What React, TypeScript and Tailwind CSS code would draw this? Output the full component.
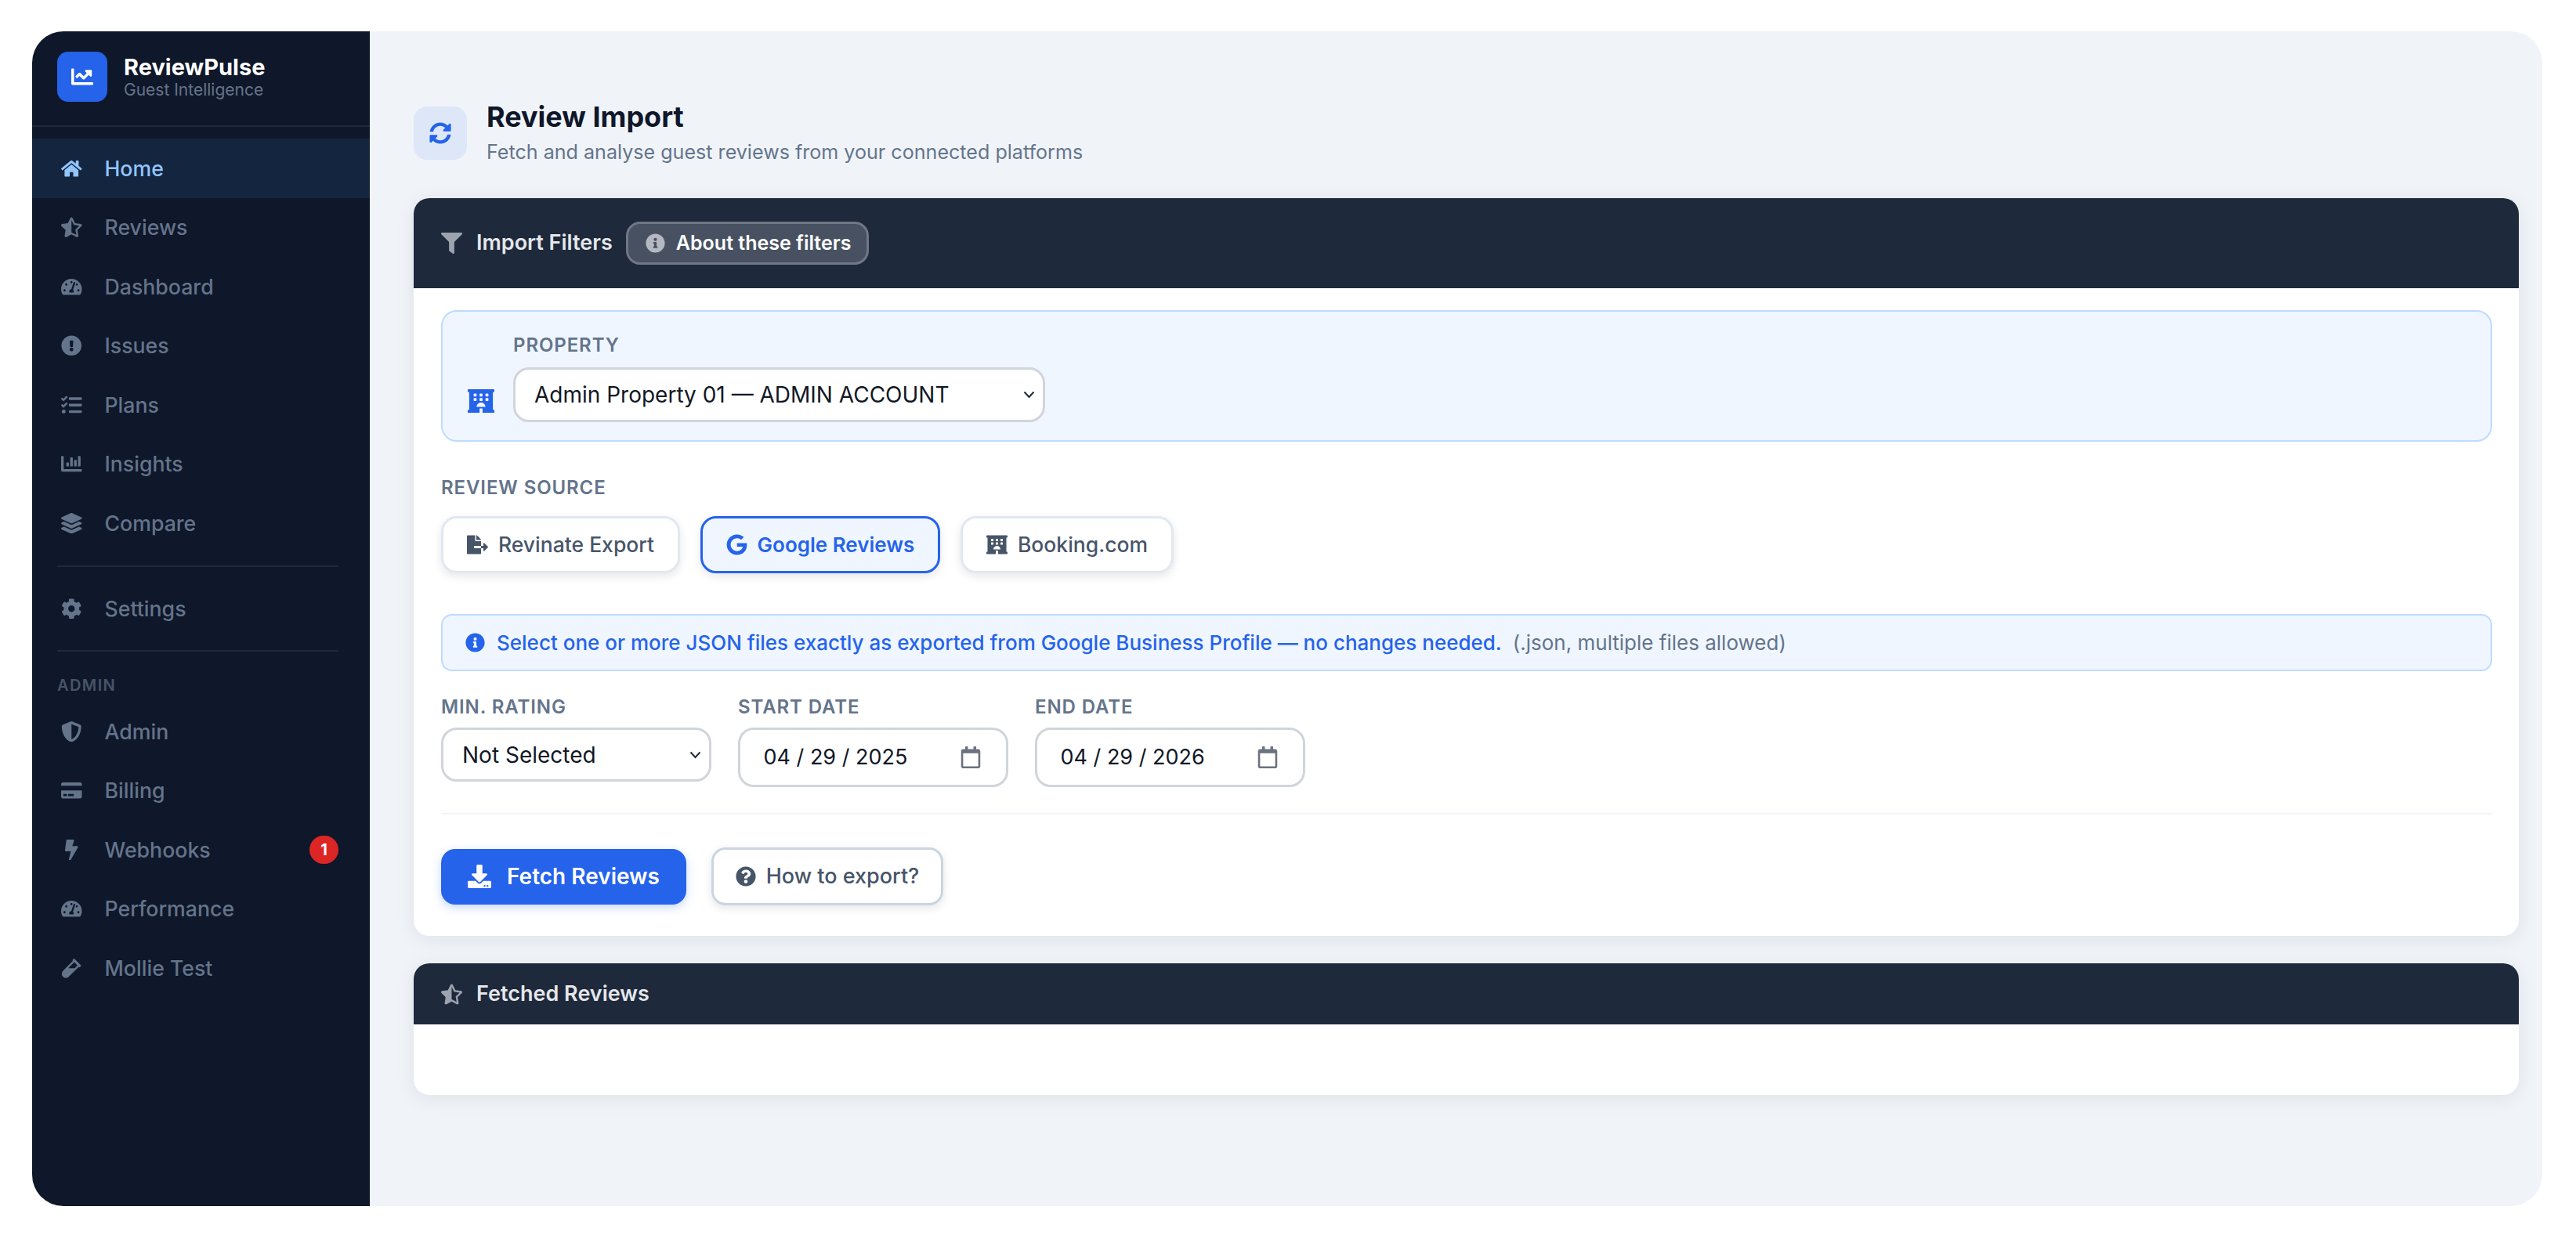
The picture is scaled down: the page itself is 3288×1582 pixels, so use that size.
import type { ReactNode } from 'react'
import {
  FaBolt, FaChartBar, FaChartLine, FaCog, FaCreditCard, FaDownload,
  FaExclamationCircle, FaFileExport, FaFilter, FaGoogle, FaHome, FaHotel, FaInfoCircle,
  FaLayerGroup, FaQuestionCircle, FaShieldAlt, FaStarHalfAlt, FaSyncAlt, FaTachometerAlt,
  FaTasks, FaVial, FaRegCalendar,
} from 'react-icons/fa'

const FONT = "font-['Inter','Noto_Sans',sans-serif]"

const MAIN_NAV = [
  { label: 'Home', icon: FaHome, active: true },
  { label: 'Reviews', icon: FaStarHalfAlt },
  { label: 'Dashboard', icon: FaTachometerAlt },
  { label: 'Issues', icon: FaExclamationCircle },
  { label: 'Plans', icon: FaTasks },
  { label: 'Insights', icon: FaChartBar },
  { label: 'Compare', icon: FaLayerGroup },
]

const ADMIN_NAV = [
  { label: 'Admin', icon: FaShieldAlt },
  { label: 'Billing', icon: FaCreditCard },
  { label: 'Webhooks', icon: FaBolt, badge: 1 },
  { label: 'Performance', icon: FaTachometerAlt },
  { label: 'Mollie Test', icon: FaVial },
]

function NavItem({ label, icon: Icon, active, badge }: {
  label: string
  icon: typeof FaHome
  active?: boolean
  badge?: number
}) {
  return (
    <div className={`flex h-[75.5px] items-center pl-[37px] pr-[40px] text-[26.7px] font-medium ${active ? 'bg-[#14253f] text-[#93c5fd]' : 'text-[#64748b]'}`}>
      <span className="flex w-[55.5px] shrink-0 items-center">
        <Icon className="h-[26.5px] w-auto" />
      </span>
      <span className="flex-1">{label}</span>
      {badge && (
        <span className="flex h-[36px] w-[37px] items-center justify-center rounded-full bg-[#dc2626] text-[20px] font-bold text-white">
          {badge}
        </span>
      )}
    </div>
  )
}

function Sidebar() {
  return (
    <aside className="flex w-[431px] shrink-0 flex-col bg-[#0f172a]">
      <div className="flex h-[122px] items-start gap-[21px] border-b-2 border-[#1e293b] pl-[32px] pt-[26px]">
        <div className="flex h-[64px] w-[64px] items-center justify-center rounded-[14px] bg-[#2563eb] text-white">
          <FaChartLine size={28} />
        </div>
        <div className="pt-[2px]">
          <div className="text-[29px] font-bold leading-[36px] text-white">ReviewPulse</div>
          <div className="text-[21px] leading-[22px] text-[#64748b]">Guest Intelligence</div>
        </div>
      </div>
      <nav className="pt-[15px]">
        {MAIN_NAV.map(n => <NavItem key={n.label} {...n} />)}
        <div className="ml-[32px] mr-[40px] my-[16px] h-[2px] bg-[#1e293b]" />
        <NavItem label="Settings" icon={FaCog} />
        <div className="ml-[32px] mr-[40px] mt-[15px] h-[2px] bg-[#1e293b]" />
        <div className="pb-[10px] pl-[32px] pt-[32px] text-[20px] font-semibold leading-[22px] tracking-[1.4px] text-[#475569]">ADMIN</div>
        {ADMIN_NAV.map(n => <NavItem key={n.label} {...n} />)}
      </nav>
    </aside>
  )
}

function Label({ children }: { children: ReactNode }) {
  return <div className="text-[24px] font-semibold leading-[30px] tracking-[0.9px] text-[#64748b]">{children}</div>
}

function SelectBox({ value, className }: { value: string; className: string }) {
  return (
    <div className={`relative ${className}`}>
      <select
        defaultValue={value}
        className="h-full w-full appearance-none rounded-[20px] border-[3px] border-[#d1d5db] bg-white pl-[24px] text-[28px] text-[#111827]"
      >
        <option>{value}</option>
      </select>
      <svg viewBox="0 0 15 10" className="pointer-events-none absolute right-[13px] top-1/2 h-[10px] w-[15px] -translate-y-1/2 text-[#1f2937]" fill="none" stroke="currentColor" strokeWidth="2">
        <path d="M1.5 1.5 7.5 8 13.5 1.5" />
      </svg>
    </div>
  )
}

function DateBox({ value }: { value: string }) {
  return (
    <div className="flex h-[76px] w-[345px] items-center justify-between rounded-[20px] border-[3px] border-[#d1d5db] bg-white pl-[29.5px] pr-[31px] text-[27px] text-[#111827]">
      <span>{value}</span>
      <FaRegCalendar size={28} className="text-[#6b7280]" />
    </div>
  )
}

function SourceButton({ icon: Icon, label, active, className }: {
  icon: typeof FaHome
  label: string
  active?: boolean
  className: string
}) {
  return (
    <button className={`flex h-[73px] items-center justify-center gap-[13px] rounded-[20px] border-[3px] shadow-[0_4px_12px_rgba(15,23,42,0.1)] ${active ? 'border-[#2563eb] bg-[#eff6ff] text-[26px] font-semibold text-[#2563eb]' : 'border-[#e2e8f0] bg-white text-[26.5px] font-medium text-[#475569]'} ${className}`}>
      <Icon className="h-[27px] w-auto" />
      {label}
    </button>
  )
}

function CardHeader({ icon: Icon, title, className, children }: {
  icon: typeof FaHome
  title: string
  className: string
  children?: ReactNode
}) {
  return (
    <div className={`flex items-center bg-[#1e293b] pl-[35px] text-[#e5e7eb] ${className}`}>
      <Icon size={27} className="text-[#9ca3af]" />
      <span className="ml-[18px] text-[27px] font-semibold">{title}</span>
      {children}
    </div>
  )
}

export default function App() {
  return (
    <div className={`h-[1582px] w-full bg-white pb-[42px] pl-[41px] pr-[43px] pt-[40px] ${FONT}`}>
      <div className="flex h-full overflow-hidden rounded-[40px]">
        <Sidebar />
        <main className="flex-1 bg-[#f0f4f9] pl-[56px] pr-[30px] pt-[87px]">
          <div className="flex items-start gap-[25px]">
            <div className="mt-[9px] flex h-[68px] w-[68px] items-center justify-center rounded-[17px] bg-[#dde7f8] text-[#2563eb]">
              <FaSyncAlt size={28} />
            </div>
            <div>
              <h1 className="text-[36px] font-bold leading-[44px] text-[#0f172a]">Review Import</h1>
              <p className="mt-[7px] text-[25.1px] leading-[32px] text-[#64748b]">Fetch and analyse guest reviews from your connected platforms</p>
            </div>
          </div>

          <section className="mt-[43px] overflow-hidden rounded-[20px] bg-white shadow-[0_4px_24px_rgba(15,23,42,0.08)]">
            <CardHeader icon={FaFilter} title="Import Filters" className="h-[115px]">
              <span className="ml-[17px] flex h-[55px] items-center gap-[14px] rounded-[18px] border-[3px] border-[#6f7785] bg-[#475161] pl-[22px] pr-[20px] text-[25px] font-semibold text-white">
                <FaInfoCircle size={25} className="text-[#b4b9c1]" />
                About these filters
              </span>
            </CardHeader>

            <div className="pb-[39px] pl-[35px] pr-[34px] pt-[28px]">
              <div className="flex items-end gap-[24px] rounded-[20px] border-2 border-[#bfdbfe] bg-[#eff6ff] pb-[23px] pl-[32px] pt-[28px]">
                <FaHotel size={34} className="mb-[10px] text-[#2563eb]" />
                <div>
                  <Label>PROPERTY</Label>
                  <SelectBox value="Admin Property 01 — ADMIN ACCOUNT" className="mt-[13px] h-[70px] w-[679px]" />
                </div>
              </div>

              <div className="mt-[44px]"><Label>REVIEW SOURCE</Label></div>
              <div className="mt-[21px] flex gap-[26px]">
                <SourceButton icon={FaFileExport} label="Revinate Export" className="w-[305px]" />
                <SourceButton icon={FaGoogle} label="Google Reviews" active className="w-[306px]" />
                <SourceButton icon={FaHotel} label="Booking.com" className="w-[272px]" />
              </div>

              <div className="mt-[52px] flex h-[73px] items-center rounded-[14px] border-2 border-[#bfdbfe] bg-[#eff6ff] pl-[29px] text-[26px]">
                <FaInfoCircle size={25} className="text-[#2563eb]" />
                <span className="ml-[15px] font-medium text-[#2563eb]">Select one or more JSON files exactly as exported from Google Business Profile — no changes needed.</span>
                <span className="ml-[14px] text-[#64748b]">(.json, multiple files allowed)</span>
              </div>

              <div className="mt-[31px] flex items-start gap-[34px]">
                <div>
                  <Label>MIN. RATING</Label>
                  <SelectBox value="Not Selected" className="mt-[11px] h-[69px] w-[345px]" />
                </div>
                <div>
                  <Label>START DATE</Label>
                  <div className="mt-[11px]"><DateBox value="04 / 29 / 2025" /></div>
                </div>
                <div>
                  <Label>END DATE</Label>
                  <div className="mt-[11px]"><DateBox value="04 / 29 / 2026" /></div>
                </div>
              </div>

              <div className="mt-[33px] h-[2px] bg-[#f1f5f9]" />

              <div className="mt-[42px] flex items-center gap-[32px]">
                <button className="flex h-[71px] w-[313px] items-center justify-center gap-[20px] rounded-[18px] bg-[#2563eb] text-[28px] font-semibold text-white shadow-[0_4px_12px_rgba(37,99,235,0.25)]">
                  <FaDownload size={30} />
                  Fetch Reviews
                </button>
                <button className="flex h-[74px] w-[296px] items-center justify-center gap-[13px] rounded-[18px] border-[3px] border-[#cbd5e1] bg-white text-[27px] font-medium text-[#475569] shadow-[0_4px_12px_rgba(15,23,42,0.1)]">
                  <FaQuestionCircle size={26} />
                  How to export?
                </button>
              </div>
            </div>
          </section>

          <section className="mt-[35px] overflow-hidden rounded-[20px] bg-white shadow-[0_4px_24px_rgba(15,23,42,0.08)]">
            <CardHeader icon={FaStarHalfAlt} title="Fetched Reviews" className="h-[78px]" />
            <div className="h-[90px]" />
          </section>
        </main>
      </div>
    </div>
  )
}
